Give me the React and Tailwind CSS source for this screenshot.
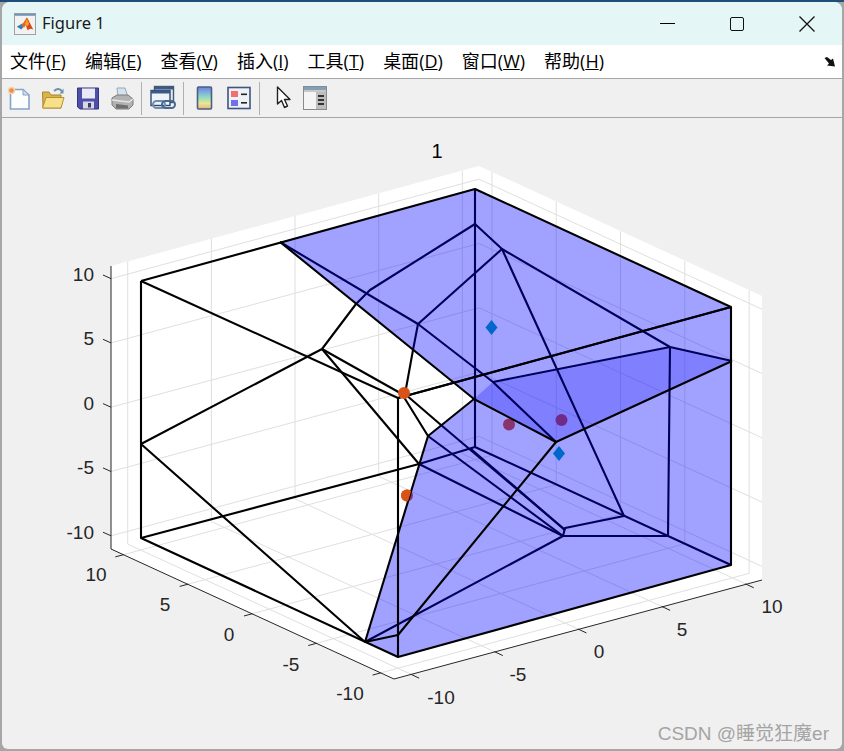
import React from 'react';

const menuItems = [
  { label: '文件', key: 'F' },
  { label: '编辑', key: 'E' },
  { label: '查看', key: 'V' },
  { label: '插入', key: 'I' },
  { label: '工具', key: 'T' },
  { label: '桌面', key: 'D' },
  { label: '窗口', key: 'W' },
  { label: '帮助', key: 'H' }
];

// projection of the axes box, read off the picture
const project = (x, y, z) => [
  436.5 + x * 16.73 - y * 12.86,
  422.5 - x * 4.52 - y * 5.91 - z * 12.86
];
const ticks = [-10, -5, 0, 5, 10];
const LIM = 11;

const seg = (a, b) => ({ x1: a[0], y1: a[1], x2: b[0], y2: b[1] });

const gridLines = [
  ...ticks.flatMap((t) => [
    seg(project(t, LIM, -LIM), project(t, LIM, LIM)),
    seg(project(t, -LIM, -LIM), project(t, LIM, -LIM)),
    seg(project(LIM, t, -LIM), project(LIM, t, LIM)),
    seg(project(-LIM, t, -LIM), project(LIM, t, -LIM)),
    seg(project(-LIM, LIM, t), project(LIM, LIM, t)),
    seg(project(LIM, -LIM, t), project(LIM, LIM, t))
  ])
];

const axisTicks = [
  ...ticks.map((t) => {
    const p = project(t, -LIM, -LIM);
    return seg(p, [p[0] + 8.5, p[1] + 4]);
  }),
  ...ticks.map((t) => {
    const p = project(-LIM, t, -LIM);
    return seg(p, [p[0] - 8.5, p[1] + 2.3]);
  }),
  ...ticks.map((t) => {
    const p = project(-LIM, LIM, t);
    return seg(p, [p[0] - 8, p[1] - 3.6]);
  })
];

const axisLabels = [
  { t: '10', x: 94, y: 274, a: 'end' },
  { t: '5', x: 94, y: 338, a: 'end' },
  { t: '0', x: 94, y: 403, a: 'end' },
  { t: '-5', x: 94, y: 467, a: 'end' },
  { t: '-10', x: 94, y: 532, a: 'end' },
  { t: '10', x: 96, y: 574, a: 'middle' },
  { t: '5', x: 165, y: 604, a: 'middle' },
  { t: '0', x: 229, y: 634, a: 'middle' },
  { t: '-5', x: 291, y: 664, a: 'middle' },
  { t: '-10', x: 350, y: 693, a: 'middle' },
  { t: '-10', x: 441, y: 697, a: 'middle' },
  { t: '-5', x: 518, y: 674, a: 'middle' },
  { t: '0', x: 599, y: 651, a: 'middle' },
  { t: '5', x: 682, y: 629, a: 'middle' },
  { t: '10', x: 772, y: 606, a: 'middle' }
];

// black edges in front of the blue faces, or clear of them
const blackEdges = [
  '141,281 475,189 731,307 731,565 398,657 141,538 141,281',
  '398,657 398,398 731,307',
  '141,281 398,398',
  '141,538 419,464',
  '280,242 474,399 556,442 732,361',
  '356,304 322,349 141,444 365,642 398,635 556,442',
  '322,349 402,394 428,436 474,399',
  '428,436 365,642',
  '322,349 419,464',
  '413,350 405,394 441,425'
];

// edges seen through the blue faces
const navyEdges = [
  '475,189 475,447 731,565',
  '280,242 418,324 493,382 556,442',
  '356,304 370,290 475,224 502,249 670,347 732,361',
  '502,249 418,324 413,350',
  '502,249 624,516 565,528 563,536 668,536 670,347',
  '493,382 670,347',
  '365,642 563,536 419,464 475,447',
  '441,425 565,530',
  '471,449 565,530',
  '428,436 563,536'
];

const Plot = () => (
  <svg viewBox="2 118 840 631" className="block w-[840px] h-[631px]">
    <defs>
      <clipPath id="leftOfFace">
        <polygon points="300,436 428,436 365,642 300,642" />
      </clipPath>
    </defs>
    <polygon points="111,266 479,166 762,296 762,580 394,679 111,549" fill="#ffffff" />
    {gridLines.map((l, i) => (
      <line key={i} {...l} stroke="#dfdfdf" strokeWidth="1" />
    ))}

    <circle cx="407" cy="495.5" r="6" fill="#d95319" />
    <circle cx="509" cy="424.5" r="6" fill="#d95319" />
    <circle cx="561.5" cy="420" r="6" fill="#e05515" />

    <polyline points={blackEdges[1]} fill="none" stroke="#000" strokeWidth="2" />
    <polygon
      points="280,242 475,189 731,307 731,565 398,657 365,642 428,436 474,399"
      fill="#0000ff"
      fillOpacity="0.37"
    />
    <polygon points="493,382 670,347 732,361 556,442" fill="#0000ff" fillOpacity="0.2" />
    <polygon points="475,398 493,382 556,442" fill="#0000ff" fillOpacity="0.25" />

    {navyEdges.map((p, i) => (
      <polyline key={i} points={p} fill="none" stroke="#000058" strokeWidth="2.1" strokeLinejoin="round" />
    ))}
    {blackEdges.map((p, i) => (
      <polyline key={i} points={p} fill="none" stroke="#000" strokeWidth="2.1" strokeLinejoin="round" />
    ))}

    <circle cx="404" cy="393" r="6" fill="#d95319" />
    <circle cx="407" cy="495.5" r="6" fill="#d95319" clipPath="url(#leftOfFace)" />
    <polygon points="491.5,320 497.5,327.5 491.5,335 485.5,327.5" fill="#0068cc" />
    <polygon points="559,446 565,453.5 559,461 553,453.5" fill="#0068cc" />

    <polyline points="111,266 111,549 394,679 762,580" fill="none" stroke="#262626" strokeWidth="1" />
    {axisTicks.map((l, i) => (
      <line key={i} {...l} stroke="#262626" strokeWidth="1" />
    ))}
    <g fontFamily="'Liberation Sans', Arial, sans-serif" fontSize="19" fill="#262626">
      {axisLabels.map((l, i) => (
        <text key={i} x={l.x} y={l.y} textAnchor={l.a} dominantBaseline="central">
          {l.t}
        </text>
      ))}
      <text x="437" y="151" textAnchor="middle" dominantBaseline="central" fontSize="20" fill="#000">
        1
      </text>
    </g>
  </svg>
);

const MatlabIcon = () => (
  <svg width="22" height="22" viewBox="0 0 24 24">
    <rect x="0.5" y="0.5" width="23" height="23" fill="#f2f2f2" stroke="#9a9a9a" />
    <rect x="1" y="1" width="22" height="2" fill="#6f93b8" />
    <path d="M3 15 L9 11.5 L12 13 L8 18 Z" fill="#2f7fb8" />
    <path d="M8 14 L14 5 L16 8 L11 16 Z" fill="#e2681f" />
    <path d="M14 5 Q17 10 21 18 Q17 16 15 19 Q13 14 12 12 Z" fill="#d9471c" />
    <path d="M14 6 L16.5 12 L14 15 L12 12 Z" fill="#f4a020" />
  </svg>
);

const NewIcon = () => (
  <svg width="24" height="26" viewBox="0 0 24 26">
    <path d="M3.5 4.5 H16 L22 10 V24 H3.5 Z" fill="#fbfdff" stroke="#86a4c8" strokeWidth="1.6" />
    <path d="M16 4.5 V10 H22 Z" fill="#cfdff0" stroke="#86a4c8" />
    <circle cx="4.5" cy="5.5" r="3" fill="#f08a4a" stroke="#f6d3a8" strokeWidth="1.5" />
  </svg>
);

const OpenIcon = () => (
  <svg width="24" height="26" viewBox="0 0 24 26">
    <path d="M1.5 7 H8 L10 10 H20 V23 H2 Z" fill="#d9b44a" stroke="#a8862c" />
    <path d="M1.5 23 L5 12.5 H23 L20 23 Z" fill="#f8e08a" stroke="#b4922f" />
    <path d="M13 6 Q18 1.5 21.5 7" fill="none" stroke="#6f93a8" strokeWidth="1.8" />
    <path d="M22.5 3.5 V8.5 H18.5 Z" fill="#6f93a8" />
  </svg>
);

const SaveIcon = () => (
  <svg width="24" height="26" viewBox="0 0 24 26">
    <path d="M1.5 3 H22.5 V24 H4 L1.5 22 Z" fill="#4e4fa8" stroke="#34357e" />
    <rect x="6" y="3.5" width="13" height="10" fill="#e8eaf6" />
    <rect x="7" y="16.5" width="11" height="7" fill="#d8d8e4" />
    <rect x="12" y="18" width="3" height="4.5" fill="#3a3a70" />
  </svg>
);

const PrintIcon = () => (
  <svg width="24" height="26" viewBox="0 0 24 26">
    <path d="M7 3 H15 L18 12 H8 Z" fill="#d6e2ee" stroke="#96a8b8" />
    <path d="M2 13 L7 10 H18 L23 14 V20 L19 24 H6 L2 20 Z" fill="#b2b2b2" stroke="#7c7c7c" />
    <path d="M2 15 L19 17 L23 14" fill="none" stroke="#e4e4e4" strokeWidth="1.4" />
    <path d="M6 19 L18 20.5 V23.5 H6 Z" fill="#6e6e6e" />
  </svg>
);

const LinkIcon = () => (
  <svg width="26" height="26" viewBox="0 0 26 26">
    <rect x="4.5" y="1.5" width="19" height="16" fill="#dfe8f2" stroke="#41597e" strokeWidth="1.4" />
    <rect x="4.5" y="1.5" width="19" height="3" fill="#41597e" />
    <rect x="1" y="5.5" width="19" height="15" fill="#eef3f8" stroke="#2f4a72" strokeWidth="1.4" />
    <rect x="1" y="5.5" width="19" height="3" fill="#3a5a88" />
    <rect x="3" y="16" width="12" height="7" rx="3.5" fill="none" stroke="#6f8fb0" strokeWidth="2" />
    <rect x="12" y="16" width="13" height="7" rx="3.5" fill="none" stroke="#46688f" strokeWidth="2" />
  </svg>
);

const ColorbarIcon = () => (
  <svg width="18" height="26" viewBox="0 0 18 26">
    <defs>
      <linearGradient id="cbar" x1="0" y1="0" x2="0" y2="1">
        <stop offset="0" stopColor="#6f7fe8" />
        <stop offset="0.45" stopColor="#8fd8c8" />
        <stop offset="0.75" stopColor="#e8e890" />
        <stop offset="1" stopColor="#f0b080" />
      </linearGradient>
    </defs>
    <rect x="1.5" y="2" width="14" height="22" rx="1" fill="url(#cbar)" stroke="#4a5f82" strokeWidth="1.6" />
  </svg>
);

const LegendIcon = () => (
  <svg width="24" height="26" viewBox="0 0 24 26">
    <rect x="1" y="2.5" width="22" height="21" fill="#eef1f6" stroke="#3f5580" strokeWidth="1.6" />
    <rect x="4" y="6" width="7" height="6" fill="#ee7070" />
    <rect x="4" y="15" width="7" height="6" fill="#7070ee" />
    <rect x="14" y="8.5" width="6" height="1.6" fill="#222" />
    <rect x="14" y="17" width="6" height="1.6" fill="#222" />
  </svg>
);

const ArrowIcon = () => (
  <svg width="16" height="26" viewBox="0 0 16 26">
    <path d="M1.5 2 V19 L5.5 15.5 L8.5 22.5 L11.5 21 L8.5 14.5 H14 Z" fill="#fff" stroke="#222" strokeWidth="1.4" strokeLinejoin="round" />
  </svg>
);

const PanelIcon = () => (
  <svg width="24" height="26" viewBox="0 0 24 26">
    <rect x="0.5" y="1.5" width="23" height="23" fill="#f4f4f4" stroke="#8a8a8a" />
    <rect x="1" y="2" width="22" height="3" fill="#7fa0b8" />
    <rect x="1" y="5" width="22" height="2" fill="#c8c8c8" />
    <rect x="13" y="7" width="10" height="17" fill="#bdbdbd" />
    <rect x="15" y="10" width="6" height="2" fill="#333" />
    <rect x="15" y="14" width="6" height="2" fill="#333" />
    <rect x="15" y="18" width="6" height="2" fill="#333" />
  </svg>
);

const Separator = () => <div className="w-px h-[33px] bg-[#b0b0b0]" />;

const App = () => {
  return (
    <div className="w-[844px] h-[751px] overflow-hidden bg-[#a6a6a6] border-t-2 border-[#1f4e79] px-[2px] pb-[2px] font-['Noto_Sans',sans-serif]">
      <div className="w-[840px] h-[747px] rounded-t-lg rounded-b-md overflow-hidden flex flex-col bg-[#f0f0f0]">
        {/* Title bar */}
        <div className="h-[43px] shrink-0 bg-[#e4f7f6] flex items-center justify-between pl-3">
          <div className="flex items-center gap-[6px]">
            <MatlabIcon />
            <span className="text-[16.5px] text-[#1a1a1a]">Figure 1</span>
          </div>
          <div className="flex items-center">
            <div className="w-[70px] flex justify-center">
              <div className="w-[15px] h-px bg-black" />
            </div>
            <div className="w-[70px] flex justify-center">
              <div className="w-[14px] h-[14px] rounded-[2px] border-[1.5px] border-[#111]" />
            </div>
            <div className="w-[70px] flex justify-center">
              <svg width="16" height="16" viewBox="0 0 16 16">
                <path d="M0.5 0.5 L15.5 15.5 M15.5 0.5 L0.5 15.5" stroke="#111" strokeWidth="1.3" />
              </svg>
            </div>
          </div>
        </div>

        {/* Menu */}
        <div className="h-[34px] shrink-0 bg-white flex items-center justify-between pl-2 pr-[6px] border-b border-[#a6a6a6]">
          <div className="flex items-center gap-[19px] text-[18px] text-black">
            {menuItems.map((item) => (
              <span key={item.key} className="font-['Open_Sans','Noto_Sans_CJK_SC',sans-serif]">
                {item.label}(<span className="underline">{item.key}</span>)
              </span>
            ))}
          </div>
          <svg width="12" height="10" viewBox="0 0 12 10">
            <path d="M0.5 1 L3 0 L7 3 L9 1.5 L11 9.5 L3 8.5 L5 6.5 Z" fill="#111" />
          </svg>
        </div>

        {/* Toolbar */}
        <div className="h-[39px] shrink-0 bg-[#f0f0f0] border-b border-[#a6a6a6] flex items-center pl-[5px]">
          <NewIcon />
          <div className="ml-[10px]"><OpenIcon /></div>
          <div className="ml-[11px]"><SaveIcon /></div>
          <div className="ml-[10px]"><PrintIcon /></div>
          <div className="ml-[7px]"><Separator /></div>
          <div className="ml-[8px]"><LinkIcon /></div>
          <div className="ml-[7px]"><Separator /></div>
          <div className="ml-[12px]"><ColorbarIcon /></div>
          <div className="ml-[13px]"><LegendIcon /></div>
          <div className="ml-[8px]"><Separator /></div>
          <div className="ml-[16px]"><ArrowIcon /></div>
          <div className="ml-[11px]"><PanelIcon /></div>
        </div>

        {/* Figure */}
        <div className="relative flex-1 min-h-0">
          <Plot />
          <span className="absolute right-[13px] bottom-[6px] text-[19px] leading-none text-[#a4a4a4] font-['Liberation_Sans','Noto_Sans_CJK_SC',sans-serif]">
            CSDN @睡觉狂魔er
          </span>
        </div>
      </div>
    </div>
  );
};

export default App;
